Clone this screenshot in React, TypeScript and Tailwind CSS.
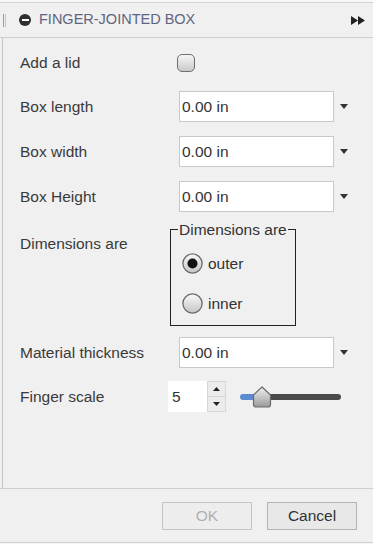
import React from "react";

const font = { fontFamily: '"Liberation Sans", Arial, sans-serif' };

function DropArrow() {
  return (
    <svg width="8" height="5" viewBox="0 0 8 5" className="ml-[4px]">
      <path d="M0 0 H8 L4 5 Z" fill="#333" />
    </svg>
  );
}

function UnitInput() {
  return (
    <div className="flex items-center">
      <div className="flex h-[31px] w-[155px] items-center border border-[#c9c9c9] bg-white pl-[2px] text-[15.5px] text-[#333]">
        0.00 in
      </div>
      <div className="flex w-[14px] justify-center pl-[2px]">
        <DropArrow />
      </div>
    </div>
  );
}

function Row({ label, children }: { label: string; children: React.ReactNode }) {
  return (
    <div className="flex h-[31px] items-center">
      <div className="w-[159px] text-[15.5px] text-[#3a3a3a]">{label}</div>
      {children}
    </div>
  );
}

function Radio({ checked }: { checked?: boolean }) {
  return (
    <svg width="21" height="21" viewBox="0 0 21 21">
      <defs>
        <linearGradient id={checked ? "rg1" : "rg2"} x1="0" y1="0" x2="0" y2="1">
          <stop offset="0" stopColor="#fafafa" />
          <stop offset="1" stopColor="#c4c4c4" />
        </linearGradient>
      </defs>
      <circle cx="10.5" cy="10.5" r="9.6" fill={`url(#${checked ? "rg1" : "rg2"})`} stroke="#6a6a6a" strokeWidth="1.3" />
      {checked && <circle cx="10.5" cy="10.5" r="5" fill="#111" />}
    </svg>
  );
}

export default function App() {
  return (
    <div className="flex h-[544px] w-[373px] flex-col bg-[#f0f0f0]" style={font}>
      {/* top strip */}
      <div className="h-[3px] border-b border-[#d2d2d2] bg-[#f8f8f8]" />

      {/* header */}
      <div className="flex h-[35px] items-center border-b border-[#cfcfcf] pr-[6px]">
        <div className="ml-[3px] flex h-[13px] gap-[1px]">
          <div className="w-[1px] bg-[#9a9a9a]" />
          <div className="w-[1px] bg-[#c4c4c4]" />
        </div>
        <div className="ml-[13px] flex h-[12px] w-[12px] items-center justify-center rounded-full bg-[#2f2f2f]">
          <div className="h-[2px] w-[7px] bg-white" />
        </div>
        <div className="ml-[8px] flex-1 text-[14.5px] text-[#5f6580]">FINGER-JOINTED BOX</div>
        <svg width="14" height="9" viewBox="0 0 14 9" className="mr-[2px]">
          <path d="M0 0 L7 4.5 L0 9 Z M7 0 L14 4.5 L7 9 Z" fill="#222" />
        </svg>
      </div>

      {/* body */}
      <div className="ml-[2px] flex flex-1 flex-col border-l border-[#c6c6c6] pl-[17px] pt-[9px]">
        <Row label="Add a lid">
          <div className="ml-[-2px] h-[18px] w-[18px] rounded-[5px] border-[1.5px] border-[#6e6e6e] bg-gradient-to-b from-[#f6f6f6] to-[#c9c9c9]" />
        </Row>

        <div className="mt-[13px] flex flex-col gap-[14px]">
          <Row label="Box length">
            <UnitInput />
          </Row>
          <Row label="Box width">
            <UnitInput />
          </Row>
          <Row label="Box Height">
            <UnitInput />
          </Row>
        </div>

        <div className="mt-[9px] flex items-start">
          <div className="mt-[11px] w-[150px] text-[15.5px] text-[#3a3a3a]">Dimensions are</div>
          <fieldset className="h-[105px] w-[126px] border border-[#222]">
            <legend className="ml-[7px] whitespace-nowrap px-[1px] text-[15.5px] leading-[17px] text-[#333]">
              Dimensions are
            </legend>
            <div className="pl-[11px]">
              <div className="mt-[14px] flex items-center gap-[5px]">
                <Radio checked />
                <span className="text-[15.5px] text-[#333]">outer</span>
              </div>
              <div className="mt-[17px] flex items-center gap-[5px]">
                <Radio />
                <span className="text-[15.5px] text-[#333]">inner</span>
              </div>
            </div>
          </fieldset>
        </div>

        <div className="mt-[11px]">
          <Row label="Material thickness">
            <UnitInput />
          </Row>
        </div>

        <div className="mt-[13px] flex h-[31px] items-center">
          <div className="w-[148px] text-[15.5px] text-[#3a3a3a]">Finger scale</div>
          <div className="flex h-[31px] w-[39px] items-center bg-white pl-[4px] text-[15.5px] text-[#333]">5</div>
          <div className="flex h-[31px] w-[19px] flex-col">
            <div className="flex flex-1 items-center justify-center border border-[#d6d6d6] bg-[#ececec]">
              <svg width="7" height="4" viewBox="0 0 7 4">
                <path d="M0 4 L3.5 0 L7 4 Z" fill="#222" />
              </svg>
            </div>
            <div className="flex flex-1 items-center justify-center border border-t-0 border-[#d6d6d6] bg-[#ececec]">
              <svg width="7" height="4" viewBox="0 0 7 4">
                <path d="M0 0 H7 L3.5 4 Z" fill="#222" />
              </svg>
            </div>
          </div>
          <div className="relative ml-[14px] h-[22px] w-[101px]">
            <div className="absolute left-0 top-[8px] flex h-[6px] w-full overflow-hidden rounded-full">
              <div className="w-[20px] bg-[#5b8bd0]" />
              <div className="flex-1 bg-[#4a4a4a]" />
            </div>
            <svg width="20" height="22" viewBox="0 0 20 22" className="absolute left-[12px] top-0">
              <defs>
                <linearGradient id="th" x1="0" y1="0" x2="0" y2="1">
                  <stop offset="0" stopColor="#f2f2f2" />
                  <stop offset="1" stopColor="#9a9a9a" />
                </linearGradient>
              </defs>
              <path d="M10 1 L18.5 9 V18.5 Q18.5 21 16 21 H4 Q1.5 21 1.5 18.5 V9 Z" fill="url(#th)" stroke="#6a6a6a" strokeWidth="1.2" strokeLinejoin="round" />
            </svg>
          </div>
        </div>

        <div className="flex-1" />
      </div>

      {/* footer */}
      <div className="flex h-[55px] items-center justify-end gap-[15px] border-t border-b border-[#cfcfcf] pr-[16px]">
        <div className="flex h-[28px] w-[90px] items-center justify-center border border-[#c4c4c4] bg-[#ededed] text-[15.5px] text-[#b0b0b0]">
          OK
        </div>
        <div className="flex h-[28px] w-[90px] items-center justify-center border border-[#b4b4b4] bg-[#e8e8e8] text-[15.5px] text-[#333]">
          Cancel
        </div>
      </div>
      <div className="h-[1px] bg-[#f6f6f6]" />
    </div>
  );
}
